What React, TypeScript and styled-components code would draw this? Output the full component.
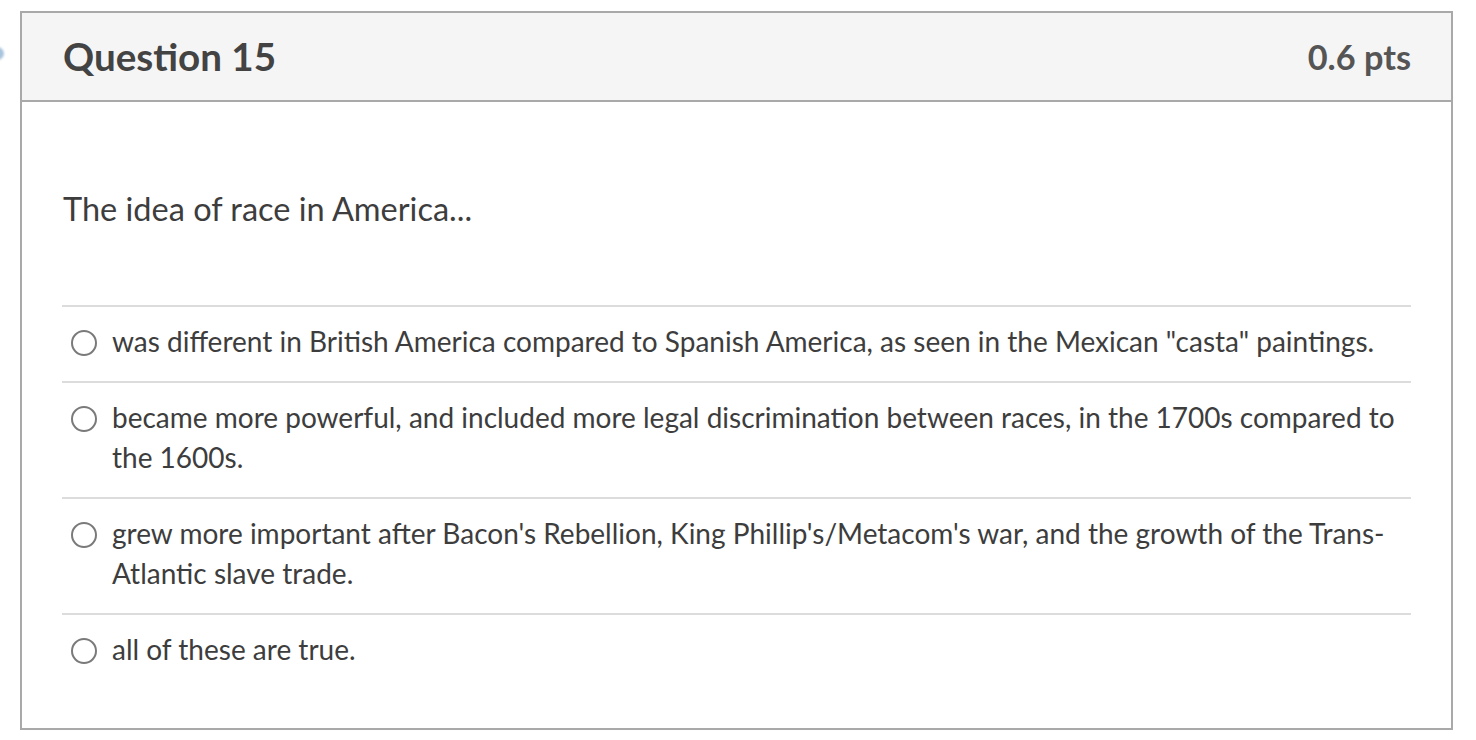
import React from "react";
import styled, { createGlobalStyle } from "styled-components";

const Global = createGlobalStyle`
  html, body { margin: 0; padding: 0; background: #fff; }
  body { font-family: Lato, "Open Sans", "Liberation Sans", sans-serif; color: #3d3d3d; }
  * { box-sizing: border-box; }
`;

const Page = styled.div`
  position: relative;
  padding: 11px 23px 0 20px;
  width: 1476px;
`;

const EdgeDot = styled.div`
  position: absolute;
  left: -9px;
  top: 47px;
  width: 13px;
  height: 13px;
  border-radius: 50%;
  background: #a9c4de;
  filter: blur(1px);
`;

const Card = styled.section`
  width: 1433px;
  height: 719px;
  border: 2px solid #a9a9a9;
  background: #fff;
`;

const Header = styled.header`
  display: flex;
  align-items: center;
  justify-content: space-between;
  height: 89px;
  padding: 0 40px 0 41px;
  background: #f5f5f5;
  border-bottom: 2px solid #a9a9a9;
`;

const Title = styled.h2`
  margin: 0 0 2px;
  font-size: 38.6px;
  font-weight: 700;
  color: #434343;
`;

const Points = styled.div`
  font-size: 34.3px;
  font-weight: 700;
  color: #555;
`;

const Body = styled.div`
  padding: 87px 40px 0 40px;
`;

const Prompt = styled.p`
  margin: 0 0 76px 1px;
  font-size: 32.5px;
  line-height: 40px;
  color: #3d3d3d;
`;

const Answers = styled.div`
  display: flex;
  flex-direction: column;
`;

const Answer = styled.label`
  display: flex;
  align-items: flex-start;
  gap: 15px;
  padding: 14px 0 20px 9px;
  border-top: 2px solid #dcdcdc;
  font-size: 28px;
  line-height: 40px;
  color: #3d3d3d;
`;

const Radio = styled.span`
  flex: none;
  width: 26px;
  height: 26px;
  margin-top: 9px;
  border: 2px solid #7a7a7a;
  border-radius: 50%;
  background: #fff;
`;

const AnswerText = styled.span`
  flex: 1;
  padding-right: 4px;
`;

const answers = [
  'was different in British America compared to Spanish America, as seen in the Mexican "casta" paintings.',
  "became more powerful, and included more legal discrimination between races, in the 1700s compared to the 1600s.",
  "grew more important after Bacon's Rebellion, King Phillip's/Metacom's war, and the growth of the Trans-Atlantic slave trade.",
  "all of these are true.",
];

export default function App() {
  return (
    <>
      <Global />
      <Page>
        <EdgeDot />
        <Card>
          <Header>
            <Title>Question 15</Title>
            <Points>0.6 pts</Points>
          </Header>
          <Body>
            <Prompt>The idea of race in America...</Prompt>
            <Answers>
              {answers.map((a) => (
                <Answer key={a}>
                  <Radio />
                  <AnswerText>{a}</AnswerText>
                </Answer>
              ))}
            </Answers>
          </Body>
        </Card>
      </Page>
    </>
  );
}
